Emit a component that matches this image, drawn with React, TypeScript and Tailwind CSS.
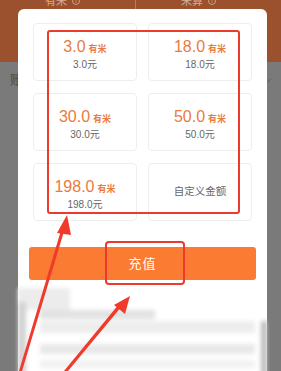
import { ChevronDown } from "lucide-react";

// Recharge dialog with red annotation marks on top

const PACKAGES = [
  { coins: "3.0", price: "3.0元" },
  { coins: "18.0", price: "18.0元" },
  { coins: "30.0", price: "30.0元" },
  { coins: "50.0", price: "50.0元" },
  { coins: "198.0", price: "198.0元" },
];

function InfoDot() {
  return (
    <span className="inline-flex w-[8px] h-[8px] rounded-full border border-[#caa08a] items-center justify-center text-[6px] leading-none ml-[5px]">
      i
    </span>
  );
}

function PackageCard({ coins, price }: { coins: string; price: string }) {
  return (
    <div className="h-[58px] rounded-[4px] border border-[#eeeeee] bg-white flex flex-col items-center justify-center pt-[6px]">
      <div className="flex items-baseline text-[#ea7b3d]">
        <span className="text-[16px] leading-[18px]">{coins}</span>
        <span className="text-[9px] font-bold ml-[3px]">有米</span>
      </div>
      <div className="text-[10px] leading-[14px] text-[#666] mt-[2px]">{price}</div>
    </div>
  );
}

function Annotations() {
  return (
    <svg className="absolute inset-0 pointer-events-none" width="281" height="371" viewBox="0 0 281 371">
      <rect x="48" y="31" width="191" height="182" rx="2" fill="none" stroke="#ec3a2e" strokeWidth="2" />
      <rect x="106" y="242" width="78" height="42" rx="3" fill="none" stroke="#ec3a2e" strokeWidth="2" />
      {/* arrow 1 */}
      <path d="M19 371 L22 371 L65 228 L62 227 Z" fill="#ef3a2c" />
      <path d="M67 215 L57 233 L71 235 Z" fill="#ef3a2c" />
      {/* arrow 2 */}
      <path d="M64 371 L68 371 L122 306 L119 304 Z" fill="#ef3a2c" />
      <path d="M130 296 L114 305 L125 314 Z" fill="#ef3a2c" />
    </svg>
  );
}

export default function App() {
  return (
    <div
      className="relative w-[281px] h-[371px] overflow-hidden bg-[#7a7a7a]"
      style={{ fontFamily: '"Liberation Sans", "Noto Sans CJK SC", sans-serif' }}
    >
      {/* page behind the dialog */}
      <div className="h-[62px] bg-[#9b512e] flex">
        <div className="flex-1 flex justify-center -mt-[6px] text-[11px] text-[#d4ab96] h-[14px] items-center pr-[10px]">
          有米<InfoDot />
        </div>
        <div className="w-px h-[12px] bg-[#b97a5b]" />
        <div className="flex-1 flex justify-center -mt-[6px] text-[11px] text-[#d4ab96] h-[14px] items-center pr-[20px]">
          米算<InfoDot />
        </div>
      </div>
      <div className="flex items-center justify-between h-[36px] px-[10px] text-[#4a4a4a]">
        <span className="text-[13px]">账</span>
        <ChevronDown size={13} strokeWidth={1.5} className="text-[#555] -mr-[3px]" />
      </div>

      {/* dialog */}
      <div className="absolute left-[18px] top-[9px] w-[249px] h-[380px] bg-white rounded-[6px] flex flex-col">
        <div className="grid grid-cols-2 gap-x-[11px] gap-y-[12px] px-[15px] pt-[14px]">
          {PACKAGES.map((p) => (
            <PackageCard key={p.coins} coins={p.coins} price={p.price} />
          ))}
          <div className="h-[58px] rounded-[4px] border border-[#eeeeee] flex items-center justify-center text-[10.5px] text-[#666]">
            自定义金额
          </div>
        </div>
        <button className="mx-[11px] mt-[26px] h-[33px] rounded-[3px] bg-[#fb7b33] text-white text-[13px] tracking-[1px]">
          充值
        </button>

        {/* blurred area below */}
        <div className="flex-1 relative mt-[8px] blur-[2px]">
          <div className="absolute left-0 top-0 w-[52px] h-[22px] bg-[#ececec]" />
          <div className="absolute left-0 top-[14px] w-[8px] h-[80px] bg-[#d2d2d2]" />
          <div className="absolute left-[22px] top-[22px] w-[115px] h-[9px] bg-[#e2e2e2]" />
          <div className="absolute left-[22px] top-[33px] w-[215px] h-[12px] bg-[#ededed]" />
          <div className="absolute left-[22px] top-[56px] w-[215px] h-[10px] bg-[#e8e8e8]" />
          <div className="absolute left-[22px] top-[72px] w-[215px] h-[8px] bg-[#f1f1f1]" />
          <div className="absolute right-0 top-[33px] w-[6px] h-[60px] bg-[#bcbcbc]" />
        </div>
      </div>

      <Annotations />
    </div>
  );
}
